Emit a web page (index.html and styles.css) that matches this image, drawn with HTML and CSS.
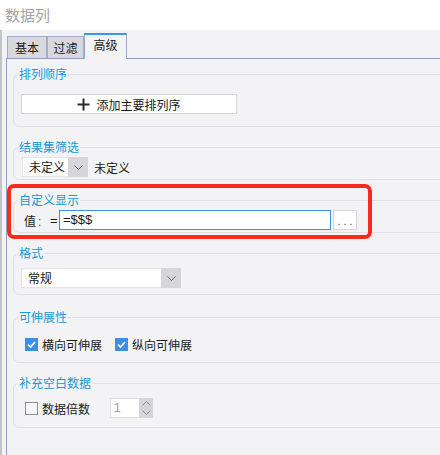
FILE: index.html
```html
<!DOCTYPE html>
<html lang="zh-CN">
<head>
    <meta charset="UTF-8">
    <title>数据列</title>
    <link rel="stylesheet" href="styles.css">
</head>
<body>
    <div class="title">数据列</div>
    <div class="main">
        <div class="tabs">
            <div class="tab tab-basic">基本</div>
            <div class="tab tab-filter">过滤</div>
            <div class="tab active">高级</div>
        </div>
        <div class="panel">
            <fieldset class="group sort">
                <legend>排列顺序</legend>
                <div class="add-btn">
                    <svg width="13" height="13" viewBox="0 0 13 13"><path d="M6.5 0.5v12M0.5 6.5h12" stroke="#2a2a2a" stroke-width="2" fill="none"/></svg>
                    <span>添加主要排列序</span>
                </div>
            </fieldset>

            <fieldset class="group filter">
                <legend>结果集筛选</legend>
                <div class="row">
                    <div class="combo combo-small">
                        <span class="combo-text">未定义</span>
                        <span class="combo-arrow"><svg width="9" height="5" viewBox="0 0 9 5"><path d="M0.5 0.5l4 4 4-4" stroke="#666" fill="none"/></svg></span>
                    </div>
                    <span class="plain">未定义</span>
                </div>
            </fieldset>

            <div class="marked">
                <fieldset class="group custom">
                    <legend>自定义显示</legend>
                    <div class="row value-row">
                        <span class="val-label">值<span class="colon">:</span></span>
                        <span class="eq">=</span>
                        <div class="val-input">=$$$</div>
                        <div class="more-btn">...</div>
                    </div>
                </fieldset>
                <div class="highlight"></div>
            </div>

            <fieldset class="group format">
                <legend>格式</legend>
                <div class="combo combo-wide">
                    <span class="combo-text">常规</span>
                    <span class="combo-arrow"><svg width="9" height="5" viewBox="0 0 9 5"><path d="M0.5 0.5l4 4 4-4" stroke="#666" fill="none"/></svg></span>
                </div>
            </fieldset>

            <fieldset class="group stretch">
                <legend>可伸展性</legend>
                <div class="row check-row">
                    <span class="cb on"><svg width="13" height="13" viewBox="0 0 13 13"><path d="M3 6.5l2.5 2.5 4.5-5" stroke="#fff" stroke-width="1.6" fill="none"/></svg></span>
                    <span class="cb-label">横向可伸展</span>
                    <span class="cb on second"><svg width="13" height="13" viewBox="0 0 13 13"><path d="M3 6.5l2.5 2.5 4.5-5" stroke="#fff" stroke-width="1.6" fill="none"/></svg></span>
                    <span class="cb-label">纵向可伸展</span>
                </div>
            </fieldset>

            <fieldset class="group blank">
                <legend>补充空白数据</legend>
                <div class="row check-row">
                    <span class="cb off"></span>
                    <span class="cb-label">数据倍数</span>
                    <div class="spin">
                        <div class="spin-input">1</div>
                        <div class="spin-arrows">
                            <svg width="9" height="5" viewBox="0 0 9 5"><path d="M0.5 4.5l4-4 4 4" stroke="#888" fill="none"/></svg>
                            <svg width="9" height="5" viewBox="0 0 9 5"><path d="M0.5 0.5l4 4 4-4" stroke="#888" fill="none"/></svg>
                        </div>
                    </div>
                </div>
            </fieldset>
        </div>
    </div>
</body>
</html>
```

FILE: styles.css
```css
body {
    margin: 0;
    width: 440px;
    height: 455px;
    overflow: hidden;
    font-family: "Noto Sans CJK SC", "Liberation Sans", sans-serif;
    font-size: 12px;
    color: #1a1a1a;
    background: #f3f3f5;
}
.title {
    height: 30px;
    line-height: 30px;
    padding-left: 5px;
    background: #fff;
    color: #a3a3a3;
    font-size: 15px;
}
.main {
    height: 425px;
    border-left: 2px solid #c4c4c8;
    padding-left: 4px;
    display: flex;
    flex-direction: column;
}
.tabs {
    display: flex;
    align-items: flex-end;
    height: 28px;
    flex-shrink: 0;
    padding-left: 1px;
    position: relative;
    z-index: 1;
}
.tab {
    box-sizing: border-box;
    height: 22px;
    line-height: 22px;
    border: 1px solid #9dadc7;
    border-bottom: none;
    background: #d9d9dd;
    text-align: center;
}
.tab-basic {
    width: 40px;
}
.tab-filter {
    width: 37px;
}
.tab.active {
    width: 43px;
    height: 26px;
    margin-bottom: -1px;
    line-height: 20px;
    border-top: 2px solid #3b98e8;
    background: #f3f3f5;
}
.panel {
    flex: 1;
    border-top: 1px solid #8ea0bf;
    border-left: 1px solid #8ea0bf;
    padding: 8px 0 0 6px;
    overflow: hidden;
}
.group {
    margin: 0 -30px 13px 0;
    padding: 0 0 0 4px;
    border: 1px solid #e0e0e4;
    border-radius: 6px;
    min-inline-size: 0;
}
.group legend {
    padding: 0 1px;
    color: #1897d9;
    line-height: 14px;
}
.sort {
    padding-top: 13px;
    padding-bottom: 12px;
}
.filter,
.custom {
    padding-top: 3px;
    padding-bottom: 2px;
}
.format {
    padding-top: 8px;
    padding-bottom: 6px;
    margin-bottom: 15px;
}
.stretch {
    padding-top: 10px;
    padding-bottom: 8px;
}
.blank {
    padding-top: 8px;
    padding-bottom: 9px;
}
.row {
    display: flex;
    align-items: center;
    height: 20px;
}
.add-btn {
    box-sizing: border-box;
    width: 216px;
    height: 20px;
    margin-left: 3px;
    border: 1px solid #d4d4d8;
    background: #fff;
    display: flex;
    align-items: center;
    justify-content: center;
    gap: 6px;
}
.combo {
    box-sizing: border-box;
    display: flex;
    height: 20px;
    background: #fff;
    border: 1px solid #e4e4e6;
    border-right: none;
}
.combo-small {
    width: 66px;
    margin-left: 4px;
}
.combo-wide {
    width: 160px;
    margin-left: 3px;
}
.combo-text {
    flex: 1;
    padding-left: 6px;
    line-height: 18px;
}
.combo-arrow {
    width: 20px;
    margin: -1px 0;
    background: #d6d6da;
    display: flex;
    align-items: center;
    justify-content: center;
}
.plain {
    margin-left: 6px;
}
.marked {
    position: relative;
    margin-bottom: 13px;
}
.marked .group {
    margin-bottom: 0;
}
.highlight {
    position: absolute;
    left: -6px;
    top: -9px;
    width: 365px;
    height: 55px;
    box-sizing: border-box;
    border: 4px solid #fb2a1e;
    border-radius: 7px;
    pointer-events: none;
}
.value-row {
    margin-left: 6px;
}
.val-label {
    width: 26px;
}
.colon {
    margin-left: 2px;
    color: #7a3f7a;
    font-family: "Liberation Sans", sans-serif;
}
.eq {
    width: 9px;
    font-family: "Liberation Sans", sans-serif;
    font-size: 13px;
}
.val-input {
    box-sizing: border-box;
    width: 272px;
    height: 20px;
    padding-left: 3px;
    border: 1px solid #3a8ee6;
    background: #fff;
    font-family: "Liberation Sans", sans-serif;
    font-size: 13px;
    line-height: 18px;
}
.more-btn {
    box-sizing: border-box;
    width: 24px;
    height: 20px;
    margin-left: 2px;
    border: 1px solid #d6d6d6;
    background: #fff;
    color: #7b3b7b;
    text-align: center;
    font-family: "Liberation Sans", sans-serif;
    font-size: 11px;
    line-height: 20px;
    letter-spacing: 3px;
    text-indent: 3px;
}
.check-row {
    margin-left: 7px;
}
.cb {
    box-sizing: border-box;
    width: 13px;
    height: 13px;
    display: flex;
}
.cb.on {
    background: #3a8fe6;
}
.cb.off {
    border: 1px solid #8e8e8e;
    background: #f7f7f7;
}
.cb.second {
    margin-left: 13px;
}
.cb-label {
    margin-left: 4px;
}
.spin {
    display: flex;
    height: 20px;
    margin-left: 20px;
}
.spin-input {
    box-sizing: border-box;
    width: 29px;
    padding-left: 3px;
    border: 1px solid #dedede;
    border-right: none;
    background: #fff;
    color: #9a9a9a;
    font-family: "Liberation Sans", sans-serif;
    font-size: 12px;
    line-height: 18px;
}
.spin-arrows {
    width: 14px;
    background: #d6d6da;
    display: flex;
    flex-direction: column;
    align-items: center;
    justify-content: center;
    gap: 4px;
}
```
